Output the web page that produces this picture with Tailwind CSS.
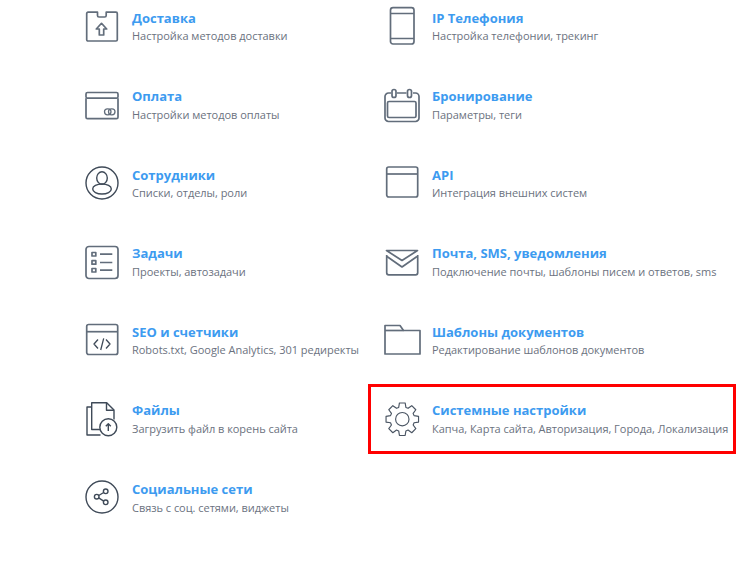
<!DOCTYPE html>
<html lang="ru">
<head>
  <meta charset="UTF-8">
  <title>Настройки</title>
  <script src="https://cdn.jsdelivr.net/npm/@tailwindcss/browser@4"></script>
</head>
<body class="bg-white font-['Open_Sans',sans-serif] overflow-hidden">
  <div class="w-[740px] h-[574px] pl-[85px] grid grid-cols-[300px_1fr] auto-rows-[54px] gap-y-[24.58px]">

    <!-- Доставка -->
    <a class="flex items-center">
      <svg class="w-[36px] h-[36px] shrink-0 mr-[11px] overflow-visible text-[#626d7b]" viewBox="0 0 36 36" fill="none" stroke="currentColor" stroke-width="1.700" stroke-linejoin="round">
        <path d="M12.500 3.200H3a1.300 1.300 0 0 0-1.300 1.300v26.200A1.300 1.300 0 0 0 3 32h28a1.300 1.300 0 0 0 1.300-1.300V4.500A1.300 1.300 0 0 0 31 3.200H21.200V6.500a1.500 1.500 0 0 1-1.500 1.500h-5.700a1.500 1.500 0 0 1-1.500-1.500z"/>
        <path d="M16.500 14.300l-5.200 5.700h3v6h4.400v-6h3z"/>
      </svg>
      <div class="tracking-[-0.03px]">
        <div class="text-[13px] leading-[18.55px] font-bold tracking-normal text-[#3d9bf0]">Доставка</div>
        <div class="text-[11px] leading-[18.35px] text-[#6b7280]">Настройка методов доставки</div>
      </div>
    </a>

    <!-- IP Телефония -->
    <a class="flex items-center">
      <svg class="w-[36px] h-[36px] shrink-0 mr-[11px] overflow-visible text-[#626d7b]" viewBox="0 0 36 36" fill="none" stroke="currentColor" stroke-width="1.700" stroke-linejoin="round">
        <rect x="5.500" y="-1.300" width="23.500" height="36.300" rx="2.500"/>
        <path d="M5.500 4.500H29M5.500 29.500H29"/>
      </svg>
      <div class="tracking-[-0.03px]">
        <div class="text-[13px] leading-[18.55px] font-bold tracking-normal text-[#3d9bf0]">IP Телефония</div>
        <div class="text-[11px] leading-[18.35px] text-[#6b7280]">Настройка телефонии, трекинг</div>
      </div>
    </a>

    <!-- Оплата -->
    <a class="flex items-center">
      <svg class="w-[36px] h-[36px] shrink-0 mr-[11px] overflow-visible text-[#626d7b]" viewBox="0 0 36 36" fill="none" stroke="currentColor" stroke-width="1.700" stroke-linejoin="round">
        <rect x="1" y="4.500" width="32" height="5.700" rx="1.500"/>
        <path d="M1 10.200v19a1.500 1.500 0 0 0 1.500 1.500h29a1.500 1.500 0 0 0 1.500-1.500v-19"/>
        <rect x="19.500" y="20.800" width="6.500" height="6" rx="3" stroke-width="1.300"/>
        <rect x="23.500" y="20.800" width="6.500" height="6" rx="3" stroke-width="1.300"/>
      </svg>
      <div class="tracking-[-0.03px]">
        <div class="text-[13px] leading-[18.55px] font-bold tracking-normal text-[#3d9bf0]">Оплата</div>
        <div class="text-[11px] leading-[18.35px] text-[#6b7280]">Настройки методов оплаты</div>
      </div>
    </a>

    <!-- Бронирование -->
    <a class="flex items-center">
      <svg class="w-[36px] h-[36px] shrink-0 mr-[11px] overflow-visible text-[#626d7b]" viewBox="0 0 36 36" fill="none" stroke="currentColor" stroke-width="1.700" stroke-linejoin="round">
        <path d="M6 5H3.500A3.500 3.500 0 0 0 0 8.500v21.500a3.500 3.500 0 0 0 3.500 3.500h27a3.500 3.500 0 0 0 3.500-3.500V8.500A3.500 3.500 0 0 0 30.500 5H28M12 5h9.500"/>
        <rect x="2.500" y="13.500" width="28.500" height="16" rx="1.500"/>
        <rect x="7" y="1.500" width="4" height="8" rx="2"/>
        <rect x="22.500" y="1.500" width="4" height="8" rx="2"/>
      </svg>
      <div class="tracking-[-0.03px]">
        <div class="text-[13px] leading-[18.55px] font-bold tracking-normal text-[#3d9bf0]">Бронирование</div>
        <div class="text-[11px] leading-[18.35px] text-[#6b7280]">Параметры, теги</div>
      </div>
    </a>

    <!-- Сотрудники -->
    <a class="flex items-center">
      <svg class="w-[36px] h-[36px] shrink-0 mr-[11px] overflow-visible text-[#3f4a58]" viewBox="0 0 36 36" fill="none" stroke="currentColor" stroke-width="1.400">
        <circle cx="17" cy="17" r="16"/>
        <ellipse cx="17" cy="12" rx="5.300" ry="6.200"/>
        <ellipse cx="17" cy="23" rx="9.300" ry="5"/>
      </svg>
      <div class="tracking-[-0.03px]">
        <div class="text-[13px] leading-[18.55px] font-bold tracking-normal text-[#3d9bf0]">Сотрудники</div>
        <div class="text-[11px] leading-[18.35px] text-[#6b7280]">Списки, отделы, роли</div>
      </div>
    </a>

    <!-- API -->
    <a class="flex items-center">
      <svg class="w-[36px] h-[36px] shrink-0 mr-[11px] overflow-visible text-[#626d7b]" viewBox="0 0 36 36" fill="none" stroke="currentColor" stroke-width="1.700" stroke-linejoin="round">
        <rect x="1.700" y="1" width="31" height="30" rx="2"/>
        <path d="M1.700 8h31"/>
      </svg>
      <div class="tracking-[-0.03px]">
        <div class="text-[13px] leading-[18.55px] font-bold tracking-normal text-[#3d9bf0]">API</div>
        <div class="text-[11px] leading-[18.35px] text-[#6b7280]">Интеграция внешних систем</div>
      </div>
    </a>

    <!-- Задачи -->
    <a class="flex items-center">
      <svg class="w-[36px] h-[36px] shrink-0 mr-[11px] overflow-visible text-[#626d7b]" viewBox="0 0 36 36" fill="none" stroke="currentColor" stroke-width="1.700" stroke-linejoin="round">
        <rect x="1" y="1.500" width="32" height="32" rx="3"/>
        <rect x="7" y="7.500" width="3.800" height="3.500"/>
        <rect x="7" y="15.700" width="3.800" height="3.500"/>
        <rect x="7" y="23.500" width="3.800" height="3.500"/>
        <path d="M15 9.200h12.300M15 17.500h12.300M15 25.200h12.300"/>
      </svg>
      <div class="tracking-[-0.03px]">
        <div class="text-[13px] leading-[18.55px] font-bold tracking-normal text-[#3d9bf0]">Задачи</div>
        <div class="text-[11px] leading-[18.35px] text-[#6b7280]">Проекты, автозадачи</div>
      </div>
    </a>

    <!-- Почта, SMS, уведомления -->
    <a class="flex items-center">
      <svg class="w-[36px] h-[36px] shrink-0 mr-[11px] overflow-visible text-[#626d7b]" viewBox="0 0 36 36" fill="none" stroke="currentColor" stroke-width="1.700" stroke-linejoin="round">
        <path d="M1.700 10v17.800a2 2 0 0 0 2 2h27a2 2 0 0 0 2-2V10"/>
        <path d="M1.500 5.500h31L17 15.500z"/>
        <path d="M2 11.500L17 22 32 11.500"/>
      </svg>
      <div class="tracking-[-0.03px]">
        <div class="text-[13px] leading-[18.55px] font-bold tracking-normal text-[#3d9bf0]">Почта, SMS, уведомления</div>
        <div class="text-[11px] leading-[18.35px] text-[#6b7280]">Подключение почты, шаблоны писем и ответов, sms</div>
      </div>
    </a>

    <!-- SEO и счетчики -->
    <a class="flex items-center">
      <svg class="w-[36px] h-[36px] shrink-0 mr-[11px] overflow-visible text-[#626d7b]" viewBox="0 0 36 36" fill="none" stroke="currentColor" stroke-width="1.700" stroke-linejoin="round">
        <rect x="1.700" y="1.500" width="31" height="30" rx="2"/>
        <path d="M1.700 8.700h31"/>
        <path d="M13 16.500l-4 4.500 4 4.500M21 16.500l4 4.500-4 4.500M18.700 15.300l-3 11.700" stroke="#3f4a58" stroke-width="1.300"/>
      </svg>
      <div class="tracking-[-0.03px]">
        <div class="text-[13px] leading-[18.55px] font-bold tracking-normal text-[#3d9bf0]">SEO и счетчики</div>
        <div class="text-[11px] leading-[18.35px] text-[#6b7280]">Robots.txt, Google Analytics, 301 редиректы</div>
      </div>
    </a>

    <!-- Шаблоны документов -->
    <a class="flex items-center">
      <svg class="w-[36px] h-[36px] shrink-0 mr-[11px] overflow-visible text-[#626d7b]" viewBox="0 0 36 36" fill="none" stroke="currentColor" stroke-width="1.700" stroke-linejoin="round">
        <path d="M0 31V2.500h15l3.500 5H35V31z"/>
        <path d="M0 7.500h18.500"/>
      </svg>
      <div class="tracking-[-0.03px]">
        <div class="text-[13px] leading-[18.55px] font-bold tracking-normal text-[#3d9bf0]">Шаблоны документов</div>
        <div class="text-[11px] leading-[18.35px] text-[#6b7280]">Редактирование шаблонов документов</div>
      </div>
    </a>

    <!-- Файлы -->
    <a class="flex items-center">
      <svg class="w-[36px] h-[36px] shrink-0 mr-[11px] overflow-visible text-[#3f4a58]" viewBox="0 0 36 36" fill="none" stroke="currentColor" stroke-width="1.400" stroke-linejoin="round">
        <path d="M6.500 5H2v28h13.500"/>
        <path d="M15 27.500H6.700V.700h15l7.300 7.300v9.500"/>
        <path d="M21.500 .700v7.500h7.500"/>
        <circle cx="23.300" cy="25.200" r="8.500"/>
        <path d="M23.300 29v-7M20.800 24.300l2.500-2.500 2.500 2.500"/>
      </svg>
      <div class="tracking-[-0.03px]">
        <div class="text-[13px] leading-[18.55px] font-bold tracking-normal text-[#3d9bf0]">Файлы</div>
        <div class="text-[11px] leading-[18.35px] text-[#6b7280]">Загрузить файл в корень сайта</div>
      </div>
    </a>

    <!-- Системные настройки -->
    <a class="relative flex items-center">
      <svg class="w-[36px] h-[36px] shrink-0 mr-[11px] overflow-visible text-[#4a5563]" viewBox="0 0 36 36" fill="none" stroke="currentColor" stroke-width="1.150" stroke-linejoin="round">
        <g transform="translate(17.300 17.200)">
          <polygon points="-3.600,-11.760 -2.870,-16.250 2.870,-16.250 3.600,-11.760 5.770,-10.860 9.460,-13.520 13.520,-9.460 10.860,-5.770 11.760,-3.600 16.250,-2.870 16.250,2.870 11.760,3.600 10.860,5.770 13.520,9.460 9.460,13.520 5.770,10.860 3.600,11.760 2.870,16.250 -2.870,16.250 -3.600,11.760 -5.770,10.860 -9.460,13.520 -13.520,9.460 -10.860,5.770 -11.760,3.600 -16.250,2.870 -16.250,-2.870 -11.760,-3.600 -10.860,-5.770 -13.520,-9.460 -9.460,-13.520 -5.770,-10.860"/>
          <circle r="6.700"/>
        </g>
      </svg>
      <div class="tracking-[-0.03px]">
        <div class="text-[13px] leading-[18.55px] font-bold tracking-normal text-[#3d9bf0]">Системные настройки</div>
        <div class="text-[11px] leading-[18.35px] text-[#6b7280] whitespace-nowrap">Капча, Карта сайта, Авторизация, Города, Локализация</div>
      </div>
      <div class="absolute left-[-17px] top-[-8.500px] w-[368px] h-[70px] border-[3px] border-[#ff0000]"></div>
    </a>

    <!-- Социальные сети -->
    <a class="flex items-center">
      <svg class="w-[36px] h-[36px] shrink-0 mr-[11px] overflow-visible text-[#3f4a58]" viewBox="0 0 36 36" fill="none" stroke="currentColor" stroke-width="1.400">
        <circle cx="17" cy="17" r="16"/>
        <circle cx="20.700" cy="11.300" r="2.300"/>
        <circle cx="20.700" cy="22.300" r="2.300"/>
        <circle cx="11.700" cy="16.700" r="2.300"/>
        <path d="M13.700 15.500l5-3M13.700 17.900l5 3.200"/>
      </svg>
      <div class="tracking-[-0.03px]">
        <div class="text-[13px] leading-[18.55px] font-bold tracking-normal text-[#3d9bf0]">Социальные сети</div>
        <div class="text-[11px] leading-[18.35px] text-[#6b7280]">Связь с соц. сетями, виджеты</div>
      </div>
    </a>
  </div>
</body>
</html>
